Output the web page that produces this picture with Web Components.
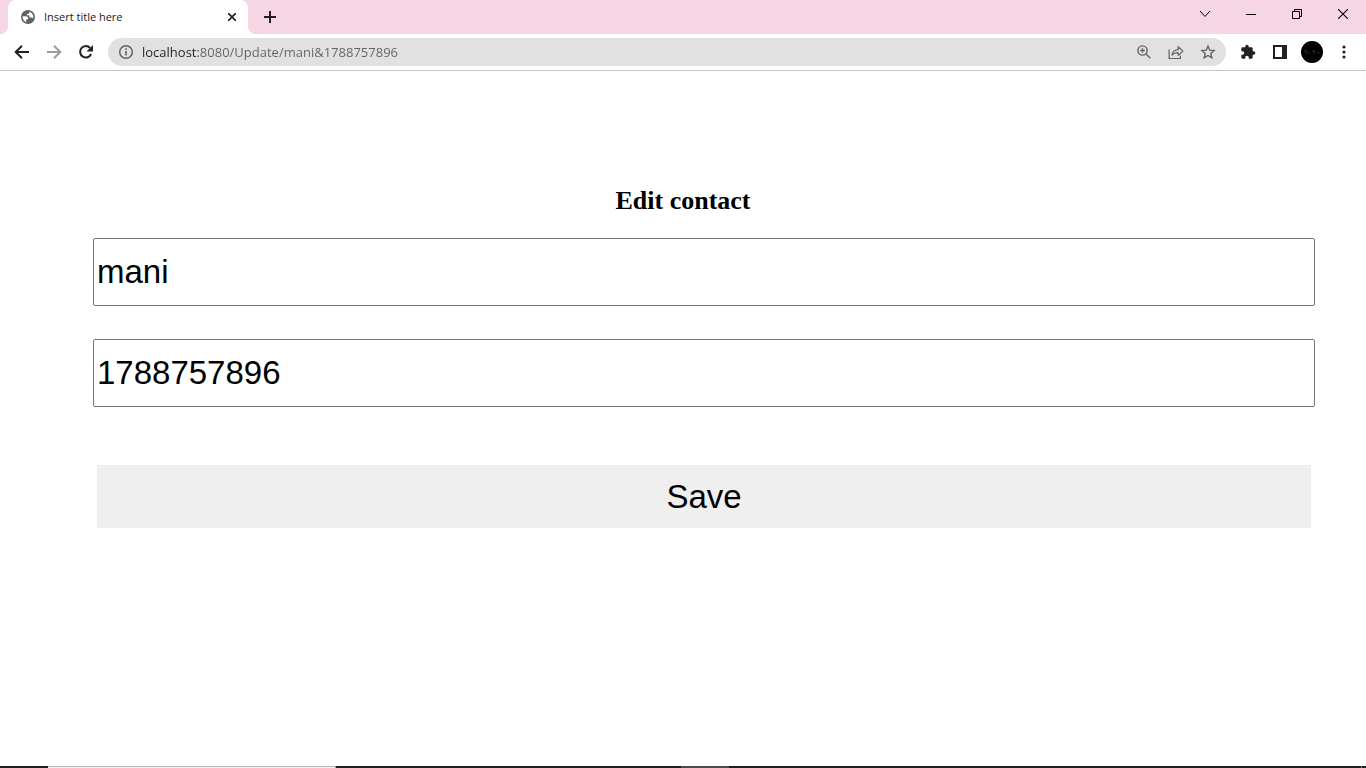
<!DOCTYPE html>
<html lang="en">
<head>
<meta charset="utf-8">
<title>Insert title here</title>
<style>
  body { margin: 0; background: #fff; color: #000; }
</style>
</head>
<body>
<browser-window>
  <tab-strip slot="tabs">
    <browser-tab label="Insert title here"></browser-tab>
  </tab-strip>
  <browser-toolbar slot="toolbar">
    <address-bar slot="address" url="localhost:8080/Update/mani&amp;1788757896"></address-bar>
  </browser-toolbar>
  <contact-form>
    <text-field label="Name" name="name" value="mani"></text-field>
    <text-field label="Phone" name="phone" value="1788757896"></text-field>
  </contact-form>
  <task-bar slot="taskbar"></task-bar>
</browser-window>

<script>
const BUTTON_RESET = `
  button { display: grid; place-items: center; margin: 0; padding: 0; border: 0;
    background: none; color: inherit; cursor: default; }
  svg { display: block; }
`;

class BaseElement extends HTMLElement {
  connectedCallback() {
    if (this.shadowRoot) return;
    const template = document.createElement('template');
    template.innerHTML = this.render();
    this.attachShadow({ mode: 'open' }).append(template.content.cloneNode(true));
    this.ready();
  }
  ready() {}
}

customElements.define('browser-window', class extends BaseElement {
  render() {
    return `<style>
      :host { display: flex; flex-direction: column; min-height: 100vh; }
      main { flex: 1; }
    </style>
    <slot name="tabs"></slot>
    <slot name="toolbar"></slot>
    <main><slot></slot></main>
    <slot name="taskbar"></slot>`;
  }
});

customElements.define('tab-strip', class extends BaseElement {
  render() {
    return `<style>
      ${BUTTON_RESET}
      :host { display: flex; height: 34px; padding-left: 8px; background: #f6d5e4; color: #202124; }
      .new { width: 28px; height: 34px; margin-left: 8px; }
      .controls { display: flex; margin-left: auto; color: #000; }
      .controls button { width: 46px; height: 28px; }
    </style>
    <slot></slot>
    <button class="new" aria-label="New tab">
      <svg width="12" height="12" viewBox="0 0 12 12" fill="currentColor"><path d="M5 0h2v5h5v2H7v5H5V7H0V5h5z"/></svg>
    </button>
    <div class="controls">
      <button aria-label="Search tabs"><svg width="12" height="12" viewBox="0 0 12 12" fill="none" stroke="currentColor"><path d="M1 3l5 5.500 5-5.500"/></svg></button>
      <button aria-label="Minimize"><svg width="10" height="10" viewBox="0 0 10 10" fill="currentColor"><path d="M0 5h10v1H0z"/></svg></button>
      <button aria-label="Restore"><svg width="10" height="10" viewBox="0 0 10 10" fill="none" stroke="currentColor"><path d="M.5 2.500h7v7h-7zM2.500 2.500v-2h7v7h-2"/></svg></button>
      <button aria-label="Close"><svg width="10" height="10" viewBox="0 0 10 10" fill="none" stroke="currentColor" stroke-width="1.1"><path d="M0 0l10 10M10 0L0 10"/></svg></button>
    </div>`;
  }
});

customElements.define('browser-tab', class extends BaseElement {
  render() {
    return `<style>
      ${BUTTON_RESET}
      :host { position: relative; display: flex; align-items: center; box-sizing: border-box;
        width: 240px; height: 34px; padding: 0 8px 0 12px; gap: 8px;
        border-radius: 8px 8px 0 0; background: #fff; color: #202124;
        font: 11px/16px "Open Sans", "Noto Sans", sans-serif; }
      :host::before, :host::after { content: ""; position: absolute; bottom: 0; width: 8px; height: 8px; }
      :host::before { right: 100%; background: radial-gradient(circle at 0 0, transparent 8px, #fff 8px); }
      :host::after { left: 100%; background: radial-gradient(circle at 100% 0, transparent 8px, #fff 8px); }
      span { flex: 1; white-space: nowrap; }
      button { width: 16px; height: 16px; }
    </style>
    <svg width="16" height="16" viewBox="0 0 16 16"><circle cx="8" cy="8" r="7" fill="#5f6368"/>
      <path fill="#fff" d="M2.600 7.300h3.200c1.500 0 2.300.8 2.300 2v.9H6.300v3c-2.300-.8-3.800-3-3.700-5.900zM9.200 2.700c2.500.6 4.200 2.700 4.200 5.300 0 .5 0 .9-.2 1.400-.5-.6-1.100-.8-1.900-.8H9.500V7.500c0-.8-.6-1.300-1.300-1.300H6.800V4.900h1.300c.7 0 1.100-.5 1.100-1.200z"/></svg>
    <span></span>
    <button aria-label="Close tab"><svg width="8" height="8" viewBox="0 0 8 8" fill="none" stroke="currentColor" stroke-width="1.700"><path d="M0 0l8 8M8 0L0 8"/></svg></button>`;
  }
  ready() { this.shadowRoot.querySelector('span').textContent = this.getAttribute('label'); }
});

customElements.define('browser-toolbar', class extends BaseElement {
  render() {
    return `<style>
      ${BUTTON_RESET}
      :host { display: flex; align-items: center; box-sizing: border-box; height: 37px;
        padding: 0 6px; border-bottom: 1px solid #c8c8c8; background: #fff; color: #202124; }
      button { width: 32px; height: 28px; }
      .off { color: #9b9c9e; }
      ::slotted(address-bar) { flex: 1; margin: 0 6px; }
    </style>
    <button aria-label="Back"><svg width="16" height="16" viewBox="0 0 16 16" fill="none" stroke="currentColor" stroke-width="2"><path d="M15 8H2.500M8 1.700L1.700 8 8 14.300"/></svg></button>
    <button class="off" aria-label="Forward" disabled><svg width="16" height="16" viewBox="0 0 16 16" fill="none" stroke="currentColor" stroke-width="2"><path d="M1 8h12.500M8 1.700L14.300 8 8 14.300"/></svg></button>
    <button aria-label="Reload"><svg width="16" height="16" viewBox="0 0 16 16"><path d="M13.100 10A5.700 5.700 0 1 1 12.100 4" fill="none" stroke="currentColor" stroke-width="2"/><path d="M15 1v6.500H8.500z" fill="currentColor"/></svg></button>
    <slot name="address"></slot>
    <button aria-label="Extensions"><svg width="16" height="16" viewBox="0 0 24 24" fill="currentColor"><path d="M20.500 11H19V7c0-1.100-.9-2-2-2h-4V3.500a2.500 2.500 0 0 0-5 0V5H4c-1.100 0-2 .9-2 2v3.800h1.500c1.500 0 2.700 1.200 2.700 2.700S5 16.200 3.500 16.200H2V20c0 1.100.9 2 2 2h3.800v-1.500c0-1.500 1.200-2.700 2.700-2.700s2.700 1.200 2.700 2.700V22H17c1.100 0 2-.9 2-2v-4h1.500a2.500 2.500 0 0 0 0-5z"/></svg></button>
    <button aria-label="Side panel"><svg width="14" height="14" viewBox="0 0 14 14" fill="currentColor"><path fill-rule="evenodd" d="M0 0h14v14H0zM2 2v10h7V2z"/></svg></button>
    <button aria-label="Profile"><svg width="22" height="22" viewBox="0 0 22 22"><circle cx="11" cy="11" r="11" fill="#000"/><path d="M3 10h4M5 10v3M8 11v2M11 10h4M13 10v3M16 11l2 1v1" fill="none" stroke="#4a2020" stroke-width="1"/></svg></button>
    <button aria-label="Menu"><svg width="4" height="14" viewBox="0 0 4 14" fill="currentColor"><circle cx="2" cy="2" r="1.600"/><circle cx="2" cy="7" r="1.600"/><circle cx="2" cy="12" r="1.600"/></svg></button>`;
  }
});

customElements.define('address-bar', class extends BaseElement {
  render() {
    return `<style>
      ${BUTTON_RESET}
      :host { display: flex; align-items: center; box-sizing: border-box; min-width: 0; height: 28px;
        padding: 0 2px; border-radius: 14px; background: #e1e1e1; color: #5f6368; }
      button { width: 32px; height: 28px; }
      input { flex: 1; min-width: 0; height: 20px; margin: 0; padding: 0; border: 0; outline: 0;
        font: 13px/20px "Open Sans", "Noto Sans", sans-serif; color: transparent;
        background: linear-gradient(90deg, #202124 56px, #5f6368 56px);
        background-clip: text; -webkit-background-clip: text; }
    </style>
    <button aria-label="Site information"><svg width="16" height="16" viewBox="0 0 16 16" fill="none" stroke="currentColor"><circle cx="8" cy="8" r="6.300" stroke-width="1.500"/><path d="M8 7v4.500M8 4.300v1.600" stroke-width="1.600"/></svg></button>
    <input type="text" aria-label="Address" spellcheck="false">
    <button aria-label="Zoom"><svg width="14" height="14" viewBox="0 0 14 14" fill="none" stroke="currentColor" stroke-width="1.400"><circle cx="5.500" cy="5.500" r="4.600"/><path d="M9 9l4.300 4.300M5.500 3.200v4.600M3.200 5.500h4.600"/></svg></button>
    <button aria-label="Share"><svg width="16" height="16" viewBox="0 0 16 16" fill="none" stroke="currentColor" stroke-width="1.200"><path d="M1.100 5.500v9h11.300v-3"/><path stroke-linejoin="round" d="M4 11c.6-3.600 2.500-5.200 6.200-5.400V2.700L15 7.100l-4.800 4.300V8.600C7.500 8.500 5.600 9.200 4 11z"/></svg></button>
    <button aria-label="Bookmark"><svg width="16" height="16" viewBox="0 0 16 16" fill="none" stroke="currentColor" stroke-width="1.400"><path d="M8 2.200l1.700 4 4.400.4-3.300 2.900 1 4.300L8 11.500l-3.800 2.300 1-4.300-3.300-2.900 4.400-.4z"/></svg></button>`;
  }
  ready() { this.shadowRoot.querySelector('input').value = this.getAttribute('url'); }
});

customElements.define('contact-form', class extends BaseElement {
  render() {
    return `<style>
      :host { display: block; padding-top: 115px; }
      h1 { margin: 0 0 22px; text-align: center; font: bold 26px/30px "Liberation Serif", serif; }
      form { display: grid; gap: 33px; margin: 0 51px 0 93px; }
      button { margin: 25px 4px; padding: 0; border: 0; height: 63px; background: #efefef; color: #000;
        font: 33px/38px "Liberation Sans", sans-serif; }
    </style>
    <h1>Edit contact</h1>
    <form>
      <slot></slot>
      <button type="button">Save</button>
    </form>`;
  }
});

customElements.define('text-field', class extends BaseElement {
  render() {
    return `<style>
      :host { display: block; }
      input { display: block; box-sizing: border-box; width: 100%; height: 68px; margin: 0; padding: 0 3px;
        border: 1px solid #767676; border-radius: 2px; background: #fff; color: #000;
        font: 33px/38px "Liberation Sans", sans-serif; }
    </style>
    <input type="text">`;
  }
  ready() {
    const input = this.shadowRoot.querySelector('input');
    input.setAttribute('aria-label', this.getAttribute('label'));
    input.name = this.getAttribute('name');
    input.value = this.getAttribute('value');
  }
});

customElements.define('task-bar', class extends BaseElement {
  render() {
    return `<style>
      :host { display: flex; height: 2px; background: #231f20; }
      .search { width: 287px; margin-left: 48px; background: linear-gradient(#bdbdbd 1px, #f0f0f0 1px); border-right: 1px solid #999; }
      .active { width: 48px; margin-left: 345px; background: #4d4b4c; }
      .peek { width: 1px; margin-left: auto; margin-right: 4px; background: #777; }
    </style>
    <div class="search"></div>
    <div class="active"></div>
    <div class="peek"></div>`;
  }
});
</script>
</body>
</html>
